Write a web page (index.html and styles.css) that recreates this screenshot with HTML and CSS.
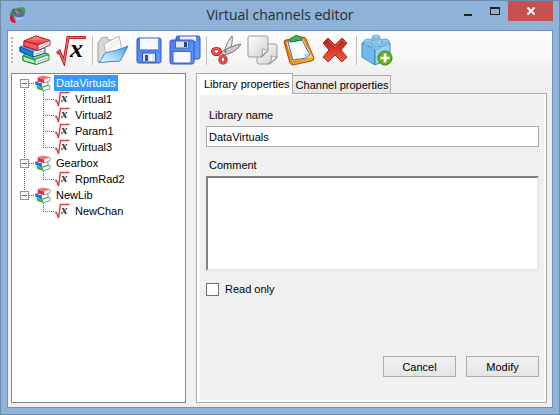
FILE: index.html
```html
<!DOCTYPE html>
<html lang="en">
<head>
<meta charset="utf-8">
<meta name="viewport" content="width=device-width, initial-scale=1">
<title>Virtual channels editor</title>
<link rel="stylesheet" href="styles.css">
</head>
<body>
<svg class="defs" aria-hidden="true">
  <defs>
    <linearGradient id="red" x1="0" y1="0" x2="0" y2="1"><stop offset="0" stop-color="#ff9a95"/><stop offset="1" stop-color="#dc2727"/></linearGradient>
    <linearGradient id="disk" x1="0" y1="0" x2="1" y2="1"><stop offset="0" stop-color="#4a7cf0"/><stop offset="1" stop-color="#5b9dfb"/></linearGradient>
    <linearGradient id="sky" x1="0" y1="1" x2="1" y2="0"><stop offset="0" stop-color="#f2fbff"/><stop offset=".5" stop-color="#9bd4f8"/><stop offset="1" stop-color="#3f94dc"/></linearGradient>
    <linearGradient id="paper" x1="0" y1="0" x2="1" y2="1"><stop offset="0" stop-color="#ffffff"/><stop offset="1" stop-color="#cfcfcf"/></linearGradient>
    <linearGradient id="cross" x1="0" y1="0" x2="0" y2="1"><stop offset="0" stop-color="#a62418"/><stop offset=".5" stop-color="#d93a26"/><stop offset="1" stop-color="#f4604a"/></linearGradient>
    <linearGradient id="board" x1="0" y1="0" x2="1" y2="1"><stop offset="0" stop-color="#e25a12"/><stop offset="1" stop-color="#ffb727"/></linearGradient>
    <symbol id="books" viewBox="0 0 32 32">
      <path d="M4 21.500 17 16.500 30 20.500V26L17 30.500 4 26.500Z" fill="#f4faf4" stroke="#128838"/>
      <path d="M4 21.500 17 16.500 30 20.500 16 25.500Z" fill="#6fe07f" stroke="#159141"/>
      <path d="M4 22 16 26v4L4 26.500Z" fill="#b9f2be" stroke="#128838"/>
      <path d="M18 28 29 24" stroke="#aaa"/>
      <path d="M1 13 14 9 26 14.500V19L14 23 1 17.500Z" fill="#f7f9fc" stroke="#14529b"/>
      <path d="M1 13 14 9 26 14.500 14 18Z" fill="#4aa3f3"/>
      <path d="M1 13 14 18v5L1 17.500Z" fill="#117ee0" stroke="#0b559f"/>
      <path d="M16 20.500 25 17" stroke="#aab"/>
      <path d="M5 7 17 2 31 6.500V11L19 16.500 5 12.500Z" fill="#fbf7f7" stroke="#b61f26"/>
      <path d="M5 7 17 2 31 6.500 19 11Z" fill="url(#red)" stroke="#cc2830"/>
      <path d="M5 7 19 11v5.500L5 12Z" fill="#f25b5b" stroke="#b61f26"/>
      <path d="M20 14 30 9" stroke="#aaa"/>
    </symbol>
    <symbol id="root" viewBox="0 0 32 32">
      <path d="M2 19.500 4.500 17.500 9 28 13 3.500H31" fill="none" stroke="#b51014" stroke-width="3"/>
      <path d="M2 19 4.500 17.500 9 28 13 3.500H30.500" fill="none" stroke="#f26a6c" stroke-width="1.400"/>
      <text x="15" y="23" class="x-large">x</text>
    </symbol>
    <symbol id="books-small" viewBox="0 0 16 16">
      <path d="M2 11 8 9l7 1.500V14L8 15.500 2 13.500Z" fill="#f3fff3" stroke="#5fb47c"/>
      <path d="M2 11 8 9l7 1.500-6 2Z" fill="#3fc05e"/><path d="M2 11 8 12.500v3L2 13.500Z" fill="#35b455"/>
      <path d="M.5 7 7 5l6 2v3l-6 2-6.500-2.500Z" fill="#f7f9fc" stroke="#8997aa"/>
      <path d="M.5 6.500 7 8.500V12L.5 9.500Z" fill="#1478e2"/>
      <path d="M3 2.500 8 1l7 1.500v3L9 8 3 6Z" fill="#fff" stroke="#b98d8d"/>
      <path d="M3 2.500 8 1l7 1.500-6 2Z" fill="#f77171"/><path d="M3 2.500 9 4.500V8L3 6Z" fill="#e32d32"/>
    </symbol>
    <symbol id="root-small" viewBox="0 0 16 16">
      <path d="M1 10 2.500 9.500 4.500 15 6.500 1.500H15.500" fill="none" stroke="#cf4346" stroke-width="1.400"/>
      <text x="7" y="11" class="x-small">x</text>
    </symbol>
    <symbol id="open" viewBox="0 0 32 32">
      <path d="M1 28V8l2-1 1-3 6-1 1 3h5v18Z" fill="#d9d9d9" stroke="#a2a2a2"/>
      <path d="M7 10 22 2l3 14-15 12Z" fill="#faf9f7" stroke="#b9b7b3"/>
      <path d="M11 12 21 6M11 15 22 9" stroke="#e4e2de"/>
      <path d="M2 28.500C6 25 6 20 9 18.500c7-1 14-3 22-6.500-3 6-5 10-8 15Z" fill="url(#sky)" stroke="#3c8bc6"/>
    </symbol>
    <symbol id="save" viewBox="0 0 32 32">
      <rect x="4" y="4" width="24" height="25" rx="2" fill="url(#disk)" stroke="#3653c8"/>
      <path d="M7 4.500H25V16H7Z" fill="#f6f9ff"/><path d="M7 16H25" stroke="#315fd9"/>
      <rect x="9.500" y="19" width="13" height="9" fill="#e1e5ee" stroke="#4057a0"/>
      <rect x="12" y="21" width="3" height="6" fill="#2b4dbb"/><path d="M18 20V27" stroke="#fff" stroke-width="2"/>
    </symbol>
    <symbol id="save-all" viewBox="0 0 32 32">
      <rect x="7" y="2" width="24" height="23" rx="2" fill="url(#disk)" stroke="#3653c8"/>
      <path d="M11 2.500H27V7H11Z" fill="#edf3ff"/>
      <rect x="1" y="6" width="24" height="24" rx="2" fill="url(#disk)" stroke="#3653c8"/>
      <rect x="6.500" y="7" width="13" height="7" fill="#e3e6ee" stroke="#5269ac"/>
      <rect x="15" y="8" width="3" height="5" fill="#253f9d"/>
      <path d="M4 17.500H22V29H4Z" fill="#f7f9ff" stroke="#3a66db"/>
    </symbol>
    <symbol id="cut" viewBox="0 0 32 32">
      <path d="M21 2C16 8 15 13 13 18l3 2C20 15 22 9 21 2Z" fill="#e7e7e7" stroke="#777"/>
      <path d="M30 10C23 11 17 14 10 18l2 3c7-1 14-4 18-11Z" fill="#c9c9c9" stroke="#777"/>
      <circle cx="14.500" cy="17.500" r="1" fill="#444"/>
      <ellipse cx="5.500" cy="17.500" rx="3.800" ry="3" fill="#f8f8f8" stroke="#c01a20" stroke-width="3.200"/>
      <ellipse cx="12" cy="25.500" rx="3" ry="3.500" fill="#f8f8f8" stroke="#c01a20" stroke-width="3.200"/>
      <ellipse cx="5.500" cy="17.500" rx="3.800" ry="3" fill="none" stroke="#f2595c" stroke-width="1.400"/>
      <ellipse cx="12" cy="25.500" rx="3" ry="3.500" fill="none" stroke="#f2595c" stroke-width="1.400"/>
    </symbol>
    <symbol id="copy" viewBox="0 0 32 32">
      <path d="M12 10H28q2 0 2 2V24l-7 6H12q-2 0-2-2V12q0-2 2-2Z" fill="url(#paper)" stroke="#9b9b9b"/>
      <path d="M30 23c-3 0-4-1-6-1 1 3 0 5-2 8Z" fill="#fff" stroke="#999"/>
      <path d="M3 2H19q2 0 2 2V17l-6 6H3q-2 0-2-2V4q0-2 2-2Z" fill="url(#paper)" stroke="#9b9b9b"/>
      <path d="M21 16c-3 0-4-1-6-1 1 3 1 5-1 8Z" fill="#fff" stroke="#999"/>
    </symbol>
    <symbol id="paste" viewBox="0 0 32 32">
      <path d="M1 8q0-2 2-2L20 3q2 0 3 2l8 19q0 3-3 3L10 31q-2 0-3-2Z" fill="url(#board)" stroke="#b84b0d"/>
      <path d="M3 8 20 5l9 18-19 4Z" fill="#ffe47c"/>
      <path d="M5 8 19 6l8 15-4 3-13 2Z" fill="#f8fbff" stroke="#3675c8"/>
      <path d="M27 21l-5-1 1 4Z" fill="#b9d5f3" stroke="#789dc7" stroke-width=".5"/>
      <path d="M7 6 8 4l3-1q1-3 4-1l3 1 1 3-11 2Z" fill="#38b552" stroke="#16803a"/>
    </symbol>
    <symbol id="delete" viewBox="0 0 32 32">
      <path d="M9 4 16 11 23 4 28 9 22 16 28 23 23 28 16 21 9 28 4 23 10 16 4 9Z" fill="url(#cross)" stroke="#a52b20" stroke-linejoin="round"/>
      <path d="M9 5.500 16 12.500 23 5.500 26.500 9" fill="none" stroke="#f08473" stroke-width=".8"/>
    </symbol>
    <symbol id="module" viewBox="0 0 32 32">
      <path d="M1 9 14 15V31L1 23Z" fill="#75b9ec" stroke="#3b83bd"/>
      <path d="M14 15 29 9V24L14 31Z" fill="#9bd1f7" stroke="#3b83bd"/>
      <path d="M1 9 16 4 29 9 14 15Z" fill="#b7e0fb" stroke="#5297c9"/>
      <g fill="#8dc9f2" stroke="#5a9ccd" stroke-width=".7"><path d="M11 3v3c1 2 7 2 8 0V3Z"/><ellipse cx="15" cy="3" rx="4" ry="2"/><path d="M3 7v3c1 2 7 2 8 0V7Z"/><ellipse cx="7" cy="7" rx="4" ry="2"/><path d="M20 7v3c1 2 7 2 8 0V7Z"/><ellipse cx="24" cy="7" rx="4" ry="2"/><path d="M11 11v3c1 2 7 2 8 0v-3Z"/><ellipse cx="15" cy="11" rx="4" ry="2"/></g>
      <circle cx="24" cy="24" r="7" fill="#67b51e" stroke="#39840f"/>
      <path d="M24 19.500v9M19.500 24h9" stroke="#fff" stroke-width="2.600"/>
    </symbol>
  </defs>
</svg>

<div class="window">
  <header class="titlebar">
    <svg class="app-icon" viewBox="0 0 16 16" aria-hidden="true">
      <path d="M7 1Q15-1 15 2q1 6-3 9Z" fill="#35a44a"/>
      <path d="M4 1Q0 4 0 9l2 3 3 1Q2 10 5 4Z" fill="#338a46"/>
      <path d="M0 9q-1 7 6 7l-1-3Q3 12 3 8Z" fill="#d11f2d"/>
      <ellipse cx="9" cy="8" rx="5" ry="5" fill="#5868bb"/>
      <path d="M5 9q4 3 9 0l-2 4H6Z" fill="#a9c8ef"/>
      <ellipse cx="7" cy="4.500" rx="4.500" ry="3" fill="#6d6058"/><path d="M5 4h3M6 6h4" stroke="#c2aa96"/>
    </svg>
    <h1 class="title">Virtual channels editor</h1>
    <div class="caption-buttons">
      <button class="caption" type="button" aria-label="Minimize"><svg width="10" height="10"><path d="M1 9h8" stroke="#222" stroke-width="2"/></svg></button>
      <button class="caption" type="button" aria-label="Maximize"><svg width="10" height="8"><path d="M.5 0V8M9.500 0V8M0 7.500H10" stroke="#222"/><path d="M0 1H10" stroke="#222" stroke-width="2"/></svg></button>
      <button class="caption close" type="button" aria-label="Close"><svg width="8" height="8"><path d="M.5.5 7.500 7.500M7.500.5.5 7.500" stroke="#fff" stroke-width="2"/></svg></button>
    </div>
  </header>

  <main class="client">
    <div class="toolbar" role="toolbar" aria-label="Editor">
      <span class="grip"></span>
      <button type="button" class="tool" aria-label="New library"><svg><use href="#books"/></svg></button>
      <button type="button" class="tool" aria-label="New channel"><svg><use href="#root"/></svg></button>
      <span class="separator"></span>
      <button type="button" class="tool" aria-label="Open"><svg><use href="#open"/></svg></button>
      <button type="button" class="tool" aria-label="Save"><svg><use href="#save"/></svg></button>
      <button type="button" class="tool" aria-label="Save all"><svg><use href="#save-all"/></svg></button>
      <span class="separator"></span>
      <button type="button" class="tool" aria-label="Cut"><svg><use href="#cut"/></svg></button>
      <button type="button" class="tool" aria-label="Copy"><svg><use href="#copy"/></svg></button>
      <button type="button" class="tool" aria-label="Paste"><svg><use href="#paste"/></svg></button>
      <button type="button" class="tool" aria-label="Delete"><svg><use href="#delete"/></svg></button>
      <span class="separator"></span>
      <button type="button" class="tool" aria-label="Add module"><svg><use href="#module"/></svg></button>
    </div>

    <div class="content">
      <nav class="tree" aria-label="Libraries">
        <ul class="libraries">
          <li class="library">
            <div class="row"><button class="expander" type="button" aria-label="Collapse DataVirtuals"></button><span class="link"></span><svg class="node"><use href="#books-small"/></svg><span class="name selected">DataVirtuals</span></div>
            <ul class="channels">
              <li class="row"><span class="branch"></span><svg class="node"><use href="#root-small"/></svg><span class="name">Virtual1</span></li>
              <li class="row"><span class="branch"></span><svg class="node"><use href="#root-small"/></svg><span class="name">Virtual2</span></li>
              <li class="row"><span class="branch"></span><svg class="node"><use href="#root-small"/></svg><span class="name">Param1</span></li>
              <li class="row"><span class="branch"></span><svg class="node"><use href="#root-small"/></svg><span class="name">Virtual3</span></li>
            </ul>
          </li>
          <li class="library">
            <div class="row"><button class="expander" type="button" aria-label="Collapse Gearbox"></button><span class="link"></span><svg class="node"><use href="#books-small"/></svg><span class="name">Gearbox</span></div>
            <ul class="channels">
              <li class="row"><span class="branch"></span><svg class="node"><use href="#root-small"/></svg><span class="name">RpmRad2</span></li>
            </ul>
          </li>
          <li class="library">
            <div class="row"><button class="expander" type="button" aria-label="Collapse NewLib"></button><span class="link"></span><svg class="node"><use href="#books-small"/></svg><span class="name">NewLib</span></div>
            <ul class="channels">
              <li class="row"><span class="branch"></span><svg class="node"><use href="#root-small"/></svg><span class="name">NewChan</span></li>
            </ul>
          </li>
        </ul>
      </nav>

      <section class="properties">
        <div class="tabs" role="tablist">
          <button class="tab active" type="button" role="tab" aria-selected="true">Library properties</button>
          <button class="tab" type="button" role="tab" aria-selected="false">Channel properties</button>
        </div>
        <form class="page" role="tabpanel">
          <div class="page-body">
            <label class="label" for="library-name">Library name</label>
            <input class="textbox" id="library-name" type="text" value="DataVirtuals">
            <label class="label comment-label" for="comment">Comment</label>
            <textarea class="comment" id="comment"></textarea>
            <label class="check"><input type="checkbox">Read only</label>
            <div class="actions">
              <button class="push" type="button">Cancel</button>
              <button class="push" type="button">Modify</button>
            </div>
          </div>
        </form>
      </section>
    </div>
  </main>
</div>
</body>
</html>
```
FILE: styles.css
```css
* { box-sizing: border-box; }

body {
  margin: 0;
  color: #000;
  font: 11px/16px "Liberation Sans", Arial, sans-serif;
}

button, input, textarea { margin: 0; color: inherit; font: inherit; }
ul { margin: 0; padding: 0; list-style: none; }
svg { display: block; flex: none; }
.defs { position: absolute; width: 0; height: 0; }

.x-large { font: italic bold 26px "Liberation Serif", serif; }
.x-small { font: italic bold 13px "Liberation Serif", serif; fill: #333; }

.window {
  display: flex;
  flex-direction: column;
  min-height: 100vh;
  padding: 0 6px 6px;
  border: 1px solid #6d8cab;
  background: #8fb2d9;
}

.titlebar {
  display: grid;
  grid-template-columns: 1fr auto 1fr;
  height: 29px;
}
.app-icon { width: 16px; height: 16px; margin: 6px 3px; }
.title {
  margin: 0;
  color: #2b2b2b;
  font: 14px/28px "Open Sans", "Noto Sans", sans-serif;
}
.caption-buttons { display: flex; justify-content: flex-end; }
.caption {
  display: flex;
  align-items: center;
  justify-content: center;
  width: 27px;
  height: 20px;
  padding: 0;
  border: 0;
  background: none;
}
.caption.close { width: 45px; background: #c75050; }

.client {
  display: flex;
  flex: 1;
  flex-direction: column;
  border: 1px solid #6f93ba;
  background: #f0f0f0;
}

.toolbar {
  display: flex;
  align-items: center;
  height: 42px;
  padding: 0 0 4px 3px;
  background: linear-gradient(#fdfdfd, #f7f7f7 60%, #f0f0f0);
}
.grip {
  width: 2px;
  height: 27px;
  margin-right: 4px;
  background: repeating-linear-gradient(#b5b5b5 0 2px, transparent 2px 4px);
}
.tool { padding: 2px; border: 0; background: none; }
.tool svg { width: 32px; height: 32px; }
.separator {
  width: 1px;
  height: 29px;
  margin: 0 2px 0 3px;
  background: #bdbdbd;
}

.content { display: flex; flex: 1; gap: 10px; padding: 0 5px 4px 3px; }

.tree {
  flex: 0 0 175px;
  padding: 1px 8px;
  border: 1px solid #828790;
  background: #fff;
}
.library { background: repeating-linear-gradient(#606060 0 1px, transparent 1px 2px) 4px 0 / 1px 100% no-repeat; }
.library:first-child { background-position: 4px 8px; }
.library:last-child { background-size: 1px 8px; }
.row { display: flex; align-items: center; height: 16px; }
.expander {
  width: 9px;
  height: 9px;
  padding: 0;
  border: 1px solid #919191;
  background: linear-gradient(#4b63a7, #4b63a7) center / 5px 1px no-repeat #f8f8f8;
}
.link, .branch {
  height: 1px;
  background: repeating-linear-gradient(90deg, #606060 0 1px, transparent 1px 2px);
}
.link { width: 6px; }
.branch { width: 11px; }
.node { width: 16px; height: 16px; }
.name { margin-left: 3px; padding: 0 2px; white-space: nowrap; }
.selected { background: #3399ff; color: #fff; }
.channels {
  margin-left: 23px;
  background: repeating-linear-gradient(#606060 0 1px, transparent 1px 2px) 0 0 / 1px calc(100% - 8px) no-repeat;
}

.properties { display: flex; flex: 1; flex-direction: column; min-width: 0; }
.tabs { display: flex; align-items: flex-end; height: 20px; }
.tab {
  height: 18px;
  padding: 0 1px 0 3px;
  border: 1px solid #acacac;
  border-bottom: 0;
  border-left: 0;
  background: linear-gradient(#f0f0f0, #e5e5e5);
  white-space: nowrap;
}
.tab.active {
  z-index: 1;
  height: 21px;
  margin-bottom: -1px;
  padding: 0 2px 0 7px;
  border-left: 1px solid #acacac;
  background: #fff;
}
.page {
  display: flex;
  flex: 1;
  padding: 1px 2px 2px 3px;
  border: 1px solid #acacac;
  background: #fff;
}
.page-body {
  display: flex;
  flex: 1;
  flex-direction: column;
  padding: 12px 5px 23px 6px;
  background: #f0f0f0;
}
.label { margin: 0 3px 3px; }
.textbox {
  height: 21px;
  padding: 0 2px;
  border: 1px solid #ababab;
  background: #fff;
}
.comment-label { margin-top: 10px; }
.comment {
  display: block;
  height: 95px;
  border: 2px solid;
  border-color: #828282 #e8e8e8 #e8e8e8 #828282;
  background: #fff;
  resize: none;
}
.check {
  display: flex;
  align-items: center;
  gap: 6px;
  align-self: flex-start;
  margin-top: 10px;
}
.check input {
  width: 13px;
  height: 13px;
  border: 1px solid #707070;
  background: #fff;
  appearance: none;
}
.actions {
  display: flex;
  justify-content: flex-end;
  gap: 10px;
  margin-top: auto;
}
.push {
  width: 73px;
  height: 21px;
  padding: 0;
  border: 1px solid #acacac;
  background: linear-gradient(#f0f0f0, #e5e5e5);
}
```
